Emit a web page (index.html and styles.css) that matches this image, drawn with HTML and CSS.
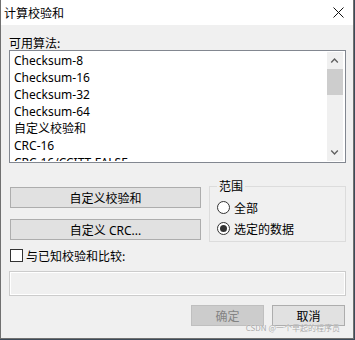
FILE: index.html
```html
<!DOCTYPE html>
<html lang="zh-CN">
<head>
	<meta charset="UTF-8">
	<title>计算校验和</title>
	<link rel="stylesheet" href="styles.css">
</head>
<body>
	<div class="dialog">
		<div class="titlebar">
			<span class="title">计算校验和</span>
			<svg class="close" width="11" height="11" viewBox="0 0 11 11">
				<path d="M0.5 0.5 L10.5 10.5 M10.5 0.5 L0.5 10.5" stroke="#111" stroke-width="1"/>
			</svg>
		</div>
		<div class="content">
			<p class="label">可用算法:</p>
			<div class="listbox">
				<ul class="items">
					<li>Checksum-8</li>
					<li>Checksum-16</li>
					<li>Checksum-32</li>
					<li>Checksum-64</li>
					<li>自定义校验和</li>
					<li>CRC-16</li>
					<li>CRC-16/CCITT-FALSE</li>
				</ul>
				<div class="scrollbar">
					<svg class="arrow" width="17" height="17" viewBox="0 0 17 17">
						<path d="M4.5 10.5 L8 7 L11.5 10.5" fill="none" stroke="#606060" stroke-width="1.5"/>
					</svg>
					<div class="thumb"></div>
					<div class="track"></div>
					<svg class="arrow" width="17" height="17" viewBox="0 0 17 17">
						<path d="M4.5 6.5 L8 10 L11.5 6.5" fill="none" stroke="#606060" stroke-width="1.5"/>
					</svg>
				</div>
			</div>

			<div class="middle">
				<div class="actions">
					<button class="btn">自定义校验和</button>
					<button class="btn">自定义 CRC...</button>
				</div>
				<fieldset class="group">
					<legend>范围</legend>
					<label class="radio"><span class="dot"></span>全部</label>
					<label class="radio"><span class="dot on"></span>选定的数据</label>
				</fieldset>
			</div>

			<label class="check"><span class="box"></span>与已知校验和比较:</label>
			<div class="field"></div>

			<div class="footer">
				<button class="btn small disabled">确定</button>
				<button class="btn small">取消</button>
				<span class="mark">CSDN @一个早起的程序员</span>
			</div>
		</div>
	</div>
</body>
</html>
```

FILE: styles.css
```css
html,
body,
ul,
li,
p {
	margin: 0;
	padding: 0;
}
li {
	list-style: none;
}
body {
	width: 355px;
	height: 340px;
	background: #3d4a58;
	font-family: "Noto Sans", "Noto Sans CJK SC", sans-serif;
	font-size: 12px;
	color: #000;
}
.dialog {
	width: 352px;
	height: 338px;
	background: #f0f0f0;
	border: 1px solid #707070;
	border-top: none;
	position: relative;
}
.titlebar {
	height: 25px;
	background: #fff;
	display: flex;
	align-items: center;
	justify-content: space-between;
	padding: 0 9px 0 3px;
}
.title {
	font-family: "Noto Sans CJK SC", sans-serif;
	line-height: 25px;
}
.close {
	display: block;
}
.content {
	padding: 0 7px 0 8px;
}
.label {
	margin-top: 10px;
	line-height: 15px;
	font-family: "Noto Sans CJK SC", sans-serif;
}
.listbox {
	height: 113px;
	box-sizing: border-box;
	border: 1px solid #828790;
	background: #fff;
	display: flex;
	padding: 1px;
}
.items {
	flex: 1;
	overflow: hidden;
	padding-left: 3px;
}
.items li {
	height: 17px;
	line-height: 17px;
	white-space: nowrap;
}
.scrollbar {
	width: 16px;
	background: #f0f0f0;
	display: flex;
	flex-direction: column;
	margin-right: 1px;
}
.arrow {
	display: block;
	width: 16px;
	height: 17px;
}
.thumb {
	height: 26px;
	background: #cdcdcd;
}
.track {
	flex: 1;
}
.middle {
	display: flex;
	gap: 8px;
	margin-top: 23px;
}
.actions {
	width: 191px;
	margin-left: 1px;
	display: flex;
	flex-direction: column;
	gap: 11px;
	padding-top: 1px;
}
.btn {
	height: 21px;
	box-sizing: border-box;
	border: 1px solid #adadad;
	background: #e1e1e1;
	font-family: "Noto Sans", "Noto Sans CJK SC", sans-serif;
	font-size: 12px;
	color: #000;
	padding: 0;
}
.group {
	flex: 1;
	margin: 0;
	height: 56px;
	box-sizing: border-box;
	border: 1px solid #dcdcdc;
	padding: 10px 0 0 7px;
	position: relative;
}
.group legend {
	position: absolute;
	top: -9px;
	left: 7px;
	padding: 0 2px;
	background: #f0f0f0;
	line-height: 16px;
	font-family: "Noto Sans CJK SC", sans-serif;
}
.radio,
.check {
	display: flex;
	align-items: center;
	gap: 4px;
	height: 21px;
	font-family: "Noto Sans CJK SC", sans-serif;
}
.dot {
	width: 11px;
	height: 11px;
	border: 1px solid #333;
	border-radius: 50%;
	background: #fff;
	position: relative;
}
.dot.on::after {
	content: "";
	position: absolute;
	left: 2px;
	top: 2px;
	width: 7px;
	height: 7px;
	border-radius: 50%;
	background: #333;
}
.check {
	margin: 3px 0 0 1px;
	gap: 3px;
}
.box {
	width: 11px;
	height: 11px;
	border: 1px solid #333;
	background: #fff;
}
.field {
	height: 25px;
	box-sizing: border-box;
	border: 1px solid #cccccc;
	box-shadow: inset 0 0 0 1px #fff;
	margin-top: 5px;
	width: 337px;
}
.footer {
	display: flex;
	justify-content: flex-end;
	gap: 8px;
	margin-top: 9px;
	padding-right: 1px;
	position: relative;
}
.btn.small {
	width: 73px;
	font-family: "Noto Sans CJK SC", sans-serif;
}
.btn.disabled {
	background: #cccccc;
	border-color: #bfbfbf;
	color: #838383;
}
.mark {
	position: absolute;
	right: 6px;
	top: 17px;
	font-size: 8px;
	color: #a8a8a8;
	font-family: "Noto Sans CJK SC", sans-serif;
	text-shadow: 0 0 1px #fff;
}
```
